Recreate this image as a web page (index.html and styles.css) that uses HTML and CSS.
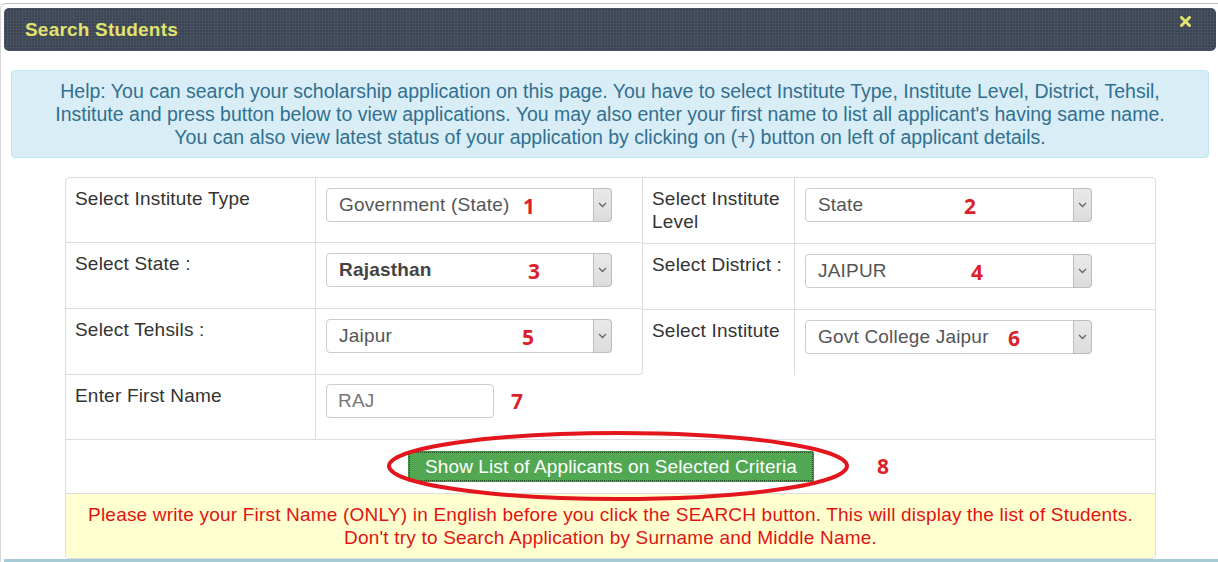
FILE: index.html
```html
<!DOCTYPE html>
<html>
<head>
<meta charset="utf-8">
<link rel="stylesheet" href="styles.css">
</head>
<body>
<div class="modal">
  <div class="modal-head">
    <span class="title">Search Students</span>
    <svg class="close" width="11" height="11" viewBox="0 0 11 11"><path d="M1.5 1.5 L9.5 9.5 M9.5 1.5 L1.5 9.5" stroke="#e3e26e" stroke-width="3" stroke-linecap="round"/></svg>
  </div>
  <div class="modal-body">
    <div class="help">Help: You can search your scholarship application on this page. You have to select Institute Type, Institute Level, District, Tehsil,<br>Institute and press button below to view applications. You may also enter your first name to list all applicant's having same name.<br>You can also view latest status of your application by clicking on (+) button on left of applicant details.</div>

    <div class="form-table">
      <div class="top">
        <div class="half left">
          <div class="row">
            <div class="lbl l1">Select Institute Type</div>
            <div class="fld f1"><div class="sel"><span class="val">Government (State)</span><span class="arrow"><svg width="9" height="6" viewBox="0 0 9 6"><path d="M1 1 L4.5 4.5 L8 1" fill="none" stroke="#666" stroke-width="1.3"/></svg></span><span class="num" style="left:196px">1</span></div></div>
          </div>
          <div class="row">
            <div class="lbl l1">Select State :</div>
            <div class="fld f1"><div class="sel"><span class="val bold">Rajasthan</span><span class="arrow"><svg width="9" height="6" viewBox="0 0 9 6"><path d="M1 1 L4.5 4.5 L8 1" fill="none" stroke="#666" stroke-width="1.3"/></svg></span><span class="num" style="left:201px">3</span></div></div>
          </div>
          <div class="row">
            <div class="lbl l1">Select Tehsils :</div>
            <div class="fld f1"><div class="sel"><span class="val">Jaipur</span><span class="arrow"><svg width="9" height="6" viewBox="0 0 9 6"><path d="M1 1 L4.5 4.5 L8 1" fill="none" stroke="#666" stroke-width="1.3"/></svg></span><span class="num" style="left:195px">5</span></div></div>
          </div>
        </div>
        <div class="half right">
          <div class="row">
            <div class="lbl l2">Select Institute Level</div>
            <div class="fld f2"><div class="sel"><span class="val">State</span><span class="arrow"><svg width="9" height="6" viewBox="0 0 9 6"><path d="M1 1 L4.5 4.5 L8 1" fill="none" stroke="#666" stroke-width="1.3"/></svg></span><span class="num" style="left:158px">2</span></div></div>
          </div>
          <div class="row">
            <div class="lbl l2">Select District :</div>
            <div class="fld f2"><div class="sel"><span class="val">JAIPUR</span><span class="arrow"><svg width="9" height="6" viewBox="0 0 9 6"><path d="M1 1 L4.5 4.5 L8 1" fill="none" stroke="#666" stroke-width="1.3"/></svg></span><span class="num" style="left:165px">4</span></div></div>
          </div>
          <div class="row">
            <div class="lbl l2">Select Institute</div>
            <div class="fld f2"><div class="sel"><span class="val">Govt College Jaipur</span><span class="arrow"><svg width="9" height="6" viewBox="0 0 9 6"><path d="M1 1 L4.5 4.5 L8 1" fill="none" stroke="#666" stroke-width="1.3"/></svg></span><span class="num" style="left:202px">6</span></div></div>
          </div>
        </div>
      </div>
      <div class="row name-row">
        <div class="lbl l1">Enter First Name</div>
        <div class="fld name-fld"><div class="inp">RAJ</div><span class="num7">7</span></div>
      </div>
      <div class="btn-row">
        <div class="btn-wrap">
          <button class="btn">Show List of Applicants on Selected Criteria</button>
          <svg class="ring" width="470" height="76" viewBox="0 0 470 76"><ellipse cx="233" cy="37" rx="229" ry="33" fill="none" stroke="#e3161e" stroke-width="4"/></svg>
        </div>
        <span class="num8">8</span>
      </div>
      <div class="note">Please write your First Name (ONLY) in English before you click the SEARCH button. This will display the list of Students.<br>Don't try to Search Application by Surname and Middle Name.</div>
    </div>
  </div>
  <div class="strip"></div>
</div>
</body>
</html>
```

FILE: styles.css
```css
html, body {
  margin: 0;
  padding: 0;
  background: #fff;
}
body {
  font-family: "Liberation Sans", Arial, sans-serif;
  font-size: 19px;
  letter-spacing: 0.2px;
  color: #333;
  width: 1218px;
  height: 562px;
  overflow: hidden;
}
.modal {
  margin-top: 3px;
  border-top: 1px solid #bdbdbd;
  border-left: 1px solid #d6d6d6;
  border-top-left-radius: 6px;
  height: 558px;
  display: flex;
  flex-direction: column;
}
.modal-head {
  margin: 4px 2px 0 3px;
  height: 43px;
  border-radius: 5px;
  background-color: #3b4554;
  background-image:
    repeating-linear-gradient(0deg, rgba(255,255,255,0.05) 0 1px, transparent 1px 3px),
    repeating-linear-gradient(90deg, rgba(255,255,255,0.05) 0 1px, transparent 1px 3px);
  display: flex;
  align-items: center;
  justify-content: space-between;
  padding: 0 25px 0 21px;
}
.title {
  color: #e3e26e;
  font-weight: bold;
  font-size: 19px;
  margin-top: 1px;
}
.close {
  align-self: flex-start;
  margin-top: 8px;
}
.modal-body {
  flex: 1;
  padding: 19px 9px 0 10px;
  display: flex;
  flex-direction: column;
}
.help {
  background: #d9edf7;
  border: 1px solid #bce8f1;
  border-radius: 4px;
  color: #31708f;
  text-align: center;
  line-height: 23px;
  padding: 9px 10px 8px;
  font-size: 19.5px;
  letter-spacing: 0;
  white-space: nowrap;
}
.form-table {
  margin: 19px 53px 0 54px;
  border: 1px solid #dddddd;
  border-radius: 4px;
}
.top {
  display: flex;
}
.half.left {
  width: 576px;
  border-right: 1px solid #dddddd;
  border-bottom: 1px solid #dddddd;
  border-bottom-right-radius: 4px;
}
.half.right {
  flex: 1;
}
.row {
  display: flex;
  height: 65px;
  border-bottom: 1px solid #dddddd;
}
.half .row:last-child {
  border-bottom: none;
}
.half.left .row:first-child { height: 64px; }
.lbl {
  padding: 9px 9px 8px;
  line-height: 23px;
  color: #333;
  border-right: 1px solid #dddddd;
}
.l1 { width: 231px; }
.l2 { width: 133px; }
.fld {
  padding: 10px 10px;
}
.f1 { width: 286px; }
.f2 { width: 287px; }
.sel {
  position: relative;
  height: 34px;
  box-sizing: border-box;
  border: 1px solid #cccccc;
  border-radius: 4px;
  display: flex;
  align-items: center;
  justify-content: space-between;
  color: #555;
  background: #fff;
}
.val {
  padding-left: 12px;
}
.bold { font-weight: bold; color: #444; }
.arrow {
  width: 17px;
  align-self: stretch;
  margin: -1px -1px -1px 0;
  border: 1px solid #bdbdbd;
  border-radius: 0 4px 4px 0;
  background: linear-gradient(#e9e9e9, #dcdcdc);
  display: flex;
  align-items: center;
  justify-content: center;
}
.num {
  position: absolute;
  top: 3px;
  font-family: "Open Sans", "Noto Sans", sans-serif;
  font-weight: 700;
  font-size: 21px;
  letter-spacing: 0;
  color: #dc1f2a;
  line-height: 28px;
}
.name-row {
  height: 64px;
}
.name-fld {
  display: flex;
  align-items: flex-start;
  padding-top: 9px;
}
.inp {
  width: 168px;
  height: 34px;
  box-sizing: border-box;
  border: 1px solid #cccccc;
  border-radius: 4px;
  color: #777;
  padding: 0 11px;
  line-height: 32px;
}
.num7, .num8 {
  font-family: "Open Sans", "Noto Sans", sans-serif;
  font-weight: 700;
  font-size: 21px;
  letter-spacing: 0;
  color: #dc1f2a;
  line-height: 28px;
}
.num7 {
  margin-left: 17px;
  margin-top: 3px;
}
.btn-row {
  position: relative;
  height: 53px;
  border-bottom: 1px solid #dddddd;
  display: flex;
  align-items: center;
  justify-content: center;
}
.btn-wrap {
  position: relative;
  margin-left: 1px;
}
.btn {
  font-family: "Liberation Sans", Arial, sans-serif;
  font-size: 19px;
  letter-spacing: 0.1px;
  color: #fff;
  background: #52a852;
  border: 1px solid #3f8f3f;
  border-radius: 2px;
  height: 31px;
  width: 406px;
  padding: 0;
  outline: 1px dotted #2b4a2b;
  outline-offset: -2px;
  display: block;
}
.ring {
  position: absolute;
  left: -23px;
  top: -22px;
  pointer-events: none;
}
.num8 {
  position: absolute;
  left: 811px;
  top: 12px;
}
.note {
  background: #ffffcf;
  color: #e11313;
  text-align: center;
  line-height: 23px;
  padding: 9px 10px 9px;
  border-radius: 0 0 4px 4px;
}
.strip {
  margin-left: 3px;
  margin-top: auto;
  height: 3px;
  background: #a6cad6;
}
```
